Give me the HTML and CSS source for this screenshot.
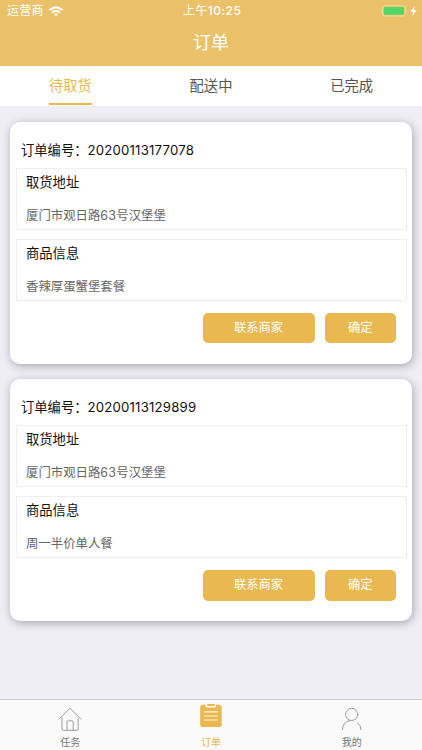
FILE: index.html
```
<!DOCTYPE html>
<html lang="zh-CN">
<head>
<meta charset="utf-8">
<title>订单</title>
<link rel="stylesheet" href="styles.css">
</head>
<body>
<div class="app">
  <header class="header">
    <div class="status">
      <div class="carrier"><span>运营商</span>
        <svg class="wifi" viewBox="0 0 14 11" width="14" height="11"><g fill="none" stroke="#fff" stroke-width="1.9"><path d="M.6 4Q7-1.6 13.4 4"/><path d="M2.9 6.6Q7 3 11.1 6.6"/></g><path d="M4.8 8.1Q7 6.3 9.2 8.1L7 10.4Z" fill="#fff"/></svg>
      </div>
      <div class="time">上午<b>10:25</b></div>
      <div class="power">
        <svg viewBox="0 0 36 12" width="36" height="12"><rect x=".5" y=".8" width="22.8" height="10.2" rx="2.6" fill="none" stroke="#f5df9f"/><rect x="1.8" y="2" width="20.2" height="7.8" rx="1.4" fill="#4cd964"/><path d="M24.8 4.2q1.3 1.7 0 3.4z" fill="#f5df9f"/><path d="M33 .9L28.4 6.7H31.2L30 11.2L34.8 5.1H31.8Z" fill="#fff"/></svg>
      </div>
    </div>
    <h1 class="title">订单</h1>
  </header>
  <nav class="tabs">
    <div class="tab"><span class="tab-label tab-active">待取货</span></div>
    <div class="tab"><span class="tab-label">配送中</span></div>
    <div class="tab"><span class="tab-label">已完成</span></div>
  </nav>
  <main class="list">
    <article class="card">
      <div class="order">订单编号：<span class="number">20200113177078</span></div>
      <section class="box"><h2>取货地址</h2><p>厦门市观日路<span class="latin">63</span>号汉堡堡</p></section>
      <section class="box"><h2>商品信息</h2><p>香辣厚蛋蟹堡套餐</p></section>
      <div class="actions"><button class="btn btn-wide">联系商家</button><button class="btn">确定</button></div>
    </article>
    <article class="card">
      <div class="order">订单编号：<span class="number">20200113129899</span></div>
      <section class="box"><h2>取货地址</h2><p>厦门市观日路<span class="latin">63</span>号汉堡堡</p></section>
      <section class="box"><h2>商品信息</h2><p>周一半价单人餐</p></section>
      <div class="actions"><button class="btn btn-wide">联系商家</button><button class="btn">确定</button></div>
    </article>
  </main>
  <footer class="bar">
    <div class="item">
      <svg viewBox="0 0 24 26" width="24" height="26"><g fill="none" stroke="#929292" stroke-width=".9" stroke-linecap="round" stroke-linejoin="round"><path d="M1 13.2L12 2.2L23 13.2"/><path d="M4 12.2V23Q4 24.3 5.3 24.3H18.9Q20.2 24.3 20.2 23V12.2"/><path d="M9 24.3V16Q9 14.8 10.2 14.8H14Q15.2 14.8 15.2 16V24.3"/></g></svg>
      <span>任务</span>
    </div>
    <div class="item item-active">
      <svg viewBox="0 0 24 26" width="24" height="26"><path d="M3.5-1.2H6.6V.7Q6.6 1.5 7.4 1.5H16.2Q17 1.5 17 .7V-1.2H20.4Q22.7-1.2 22.7 1V18.8Q22.7 21 20.4 21H3.5Q1.2 21 1.2 18.8V1Q1.2-1.2 3.5-1.2Z" fill="#e9b850"/><rect x="8.3" y="-2" width="7.4" height="2.1" rx=".4" fill="#e9b850"/><path d="M5.4 5.9H18.6M5.4 10H18.6M5.4 14H18.6" stroke="#fff5d8" stroke-width="1.1" stroke-linecap="round"/></svg>
      <span>订单</span>
    </div>
    <div class="item">
      <svg viewBox="0 0 24 26" width="24" height="26"><g fill="none" stroke="#929292" stroke-width=".9" stroke-linecap="round"><circle cx="11.7" cy="8.4" r="6.1"/><path d="M2.4 23.7Q2.8 15.6 10.2 14.5"/><path d="M17.6 16.8Q20.8 19.2 21.1 23.7"/></g></svg>
      <span>我的</span>
    </div>
  </footer>
</div>
</body>
</html>
```
FILE: styles.css
```
* { box-sizing: border-box; }
body {
  margin: 0;
  background: #efeef4;
  font-family: Inter, "Noto Sans CJK SC", sans-serif;
  color: #1a1a1a;
}
.app { width: 422px; height: 750px; display: flex; flex-direction: column; overflow: hidden; }
.header { height: 65.5px; background: #eac168; color: #fff; flex: none; }
.status {
  height: 22px;
  padding: 0 4.5px 0 7px;
  display: grid;
  grid-template-columns: 1fr auto 1fr;
  align-items: center;
  font-size: 12px;
  line-height: 22px;
}
.carrier { display: flex; align-items: center; gap: 5px; letter-spacing: .3px; }
.time { letter-spacing: .3px; }
.time b { font-weight: 500; font-size: 12px; letter-spacing: .5px; }
.power { display: flex; justify-content: flex-end; }
.title {
  margin: 0;
  text-align: center;
  font-size: 18px;
  font-weight: 400;
  line-height: 42px;
}
.tabs { height: 40.5px; flex: none; display: flex; background: #fff; }
.tab { flex: 1; display: flex; justify-content: center; }
.tab-label {
  height: 39.5px;
  line-height: 39px;
  font-size: 14.3px;
  color: #555;
  border-bottom: 2px solid transparent;
}
.tab-active { color: #e9b850; border-bottom-color: #e9b850; }
.list { flex: 1; padding: 15.5px 10.5px 0 10px; display: flex; flex-direction: column; gap: 15.5px; }
.card {
  height: 242px;
  flex: none;
  padding: 10px 5px 0 5.5px;
  background: #fff;
  border-radius: 10px;
  box-shadow: 1px 2px 8px rgba(50, 45, 65, .38);
}
.order {
  height: 36px;
  padding-left: 5.5px;
  line-height: 36px;
  font-size: 13.3px;
  color: #111;
  white-space: nowrap;
}
.number { font-size: 13.2px; letter-spacing: .2px; }
.box {
  height: 62px;
  margin-bottom: 9.3px;
  padding: 0 9.5px;
  border: 1.4px solid #eee;
}
.box h2 { margin: 0; font-size: 13.3px; font-weight: 400; line-height: 26px; color: #111; }
.box p { margin: 8px 0 0; font-size: 12.4px; line-height: 26px; color: #666; white-space: nowrap; }
.latin { letter-spacing: .3px; }
.actions { display: flex; justify-content: flex-end; gap: 10px; padding: 2.5px 10.5px 0 0; }
.btn {
  width: 71.5px;
  height: 30.5px;
  padding: 0;
  border: 0;
  border-radius: 5px;
  background: #e9b850;
  color: #fff;
  font: 12.3px/28px Inter, "Noto Sans CJK SC", sans-serif;
}
.btn-wide { width: 112px; }
.bar {
  height: 51px;
  flex: none;
  display: flex;
  background: #fafafa;
  border-top: 1px solid #cbcacf;
}
.item {
  flex: 1;
  display: flex;
  flex-direction: column;
  align-items: center;
  padding-top: 6px;
  color: #777;
  font-size: 10px;
  font-weight: 400;
  line-height: 20px;
}
.item svg { overflow: visible; flex: none; }
.item-active { color: #e9b850; }
```
